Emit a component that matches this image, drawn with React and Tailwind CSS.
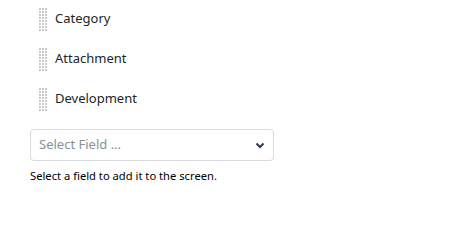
import React from "react";

const fields = ["Category", "Attachment", "Development"];

function Grip() {
  const dots = [];
  for (let r = 0; r < 8; r++) {
    for (let c = 0; c < 3; c++) {
      dots.push(<rect key={r + "-" + c} x={c * 3} y={r * 3} width="2" height="2" fill="#c9c9c9" />);
    }
  }
  return (
    <svg width="8" height="23" viewBox="0 0 8 23" className="shrink-0">
      {dots}
    </svg>
  );
}

export default function App() {
  return (
    <div className="w-[476px] h-[244px] bg-white pl-[30px] font-['Noto_Sans','Open_Sans',sans-serif] text-[#212529]">
      <div className="flex flex-col gap-[2px] pl-[9px]">
        {fields.map((f) => (
          <div key={f} className="h-[38px] flex items-center gap-[8px]">
            <Grip />
            <span className="text-[13px]">{f}</span>
          </div>
        ))}
      </div>
      <div className="mt-[11px] w-[244px] h-[32px] border border-[#d7dbe0] rounded-[4px] flex items-center justify-between pl-[8px] pr-[8px]">
        <span className="text-[13px] text-[#8a8f96]">Select Field ...</span>
        <svg width="10" height="7" viewBox="0 0 10 7">
          <path d="M1.5 1.5 L5 5 L8.5 1.5" stroke="#2b3a4f" strokeWidth="2" fill="none" />
        </svg>
      </div>
      <p className="mt-[7px] text-[11.2px] text-black">Select a field to add it to the screen.</p>
    </div>
  );
}
